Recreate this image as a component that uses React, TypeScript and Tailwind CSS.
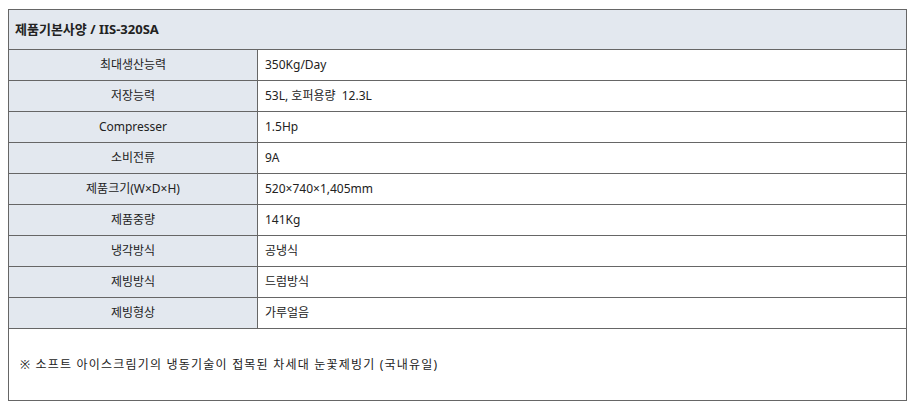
import React from "react";

const rows: [string, string][] = [
  ["최대생산능력", "350Kg/Day"],
  ["저장능력", "53L, 호퍼용량  12.3L"],
  ["Compresser", "1.5Hp"],
  ["소비전류", "9A"],
  ["제품크기(W×D×H)", "520×740×1,405mm"],
  ["제품중량", "141Kg"],
  ["냉각방식", "공냉식"],
  ["제빙방식", "드럼방식"],
  ["제빙형상", "가루얼음"],
];

export default function App() {
  return (
    <div
      className="bg-white w-[915px] h-[409px] pt-[9px] pl-[8px] text-[#222]"
      style={{ fontFamily: '"Noto Sans", "Noto Sans CJK KR", sans-serif' }}
    >
      <table className="w-[899px] border-collapse border border-[#666] text-[12px]">
        <tbody>
          <tr className="h-[40px] bg-[#e3e8ef]">
            <td colSpan={2} className="border border-[#666] pl-[6px] text-[13px] font-bold">
              제품기본사양 / IIS-320SA
            </td>
          </tr>
          {rows.map(([k, v]) => (
            <tr key={k} className="h-[31px]">
              <td className="w-[249px] border border-[#666] bg-[#e3e8ef] text-center">{k}</td>
              <td className="border border-[#666] pl-[7px] whitespace-pre">{v}</td>
            </tr>
          ))}
          <tr className="h-[72px]">
            <td colSpan={2} className="border border-[#666] pl-[11px] tracking-[1.2px]">
              ※ 소프트 아이스크림기의 냉동기술이 접목된 차세대 눈꽃제빙기 (국내유일)
            </td>
          </tr>
        </tbody>
      </table>
    </div>
  );
}
